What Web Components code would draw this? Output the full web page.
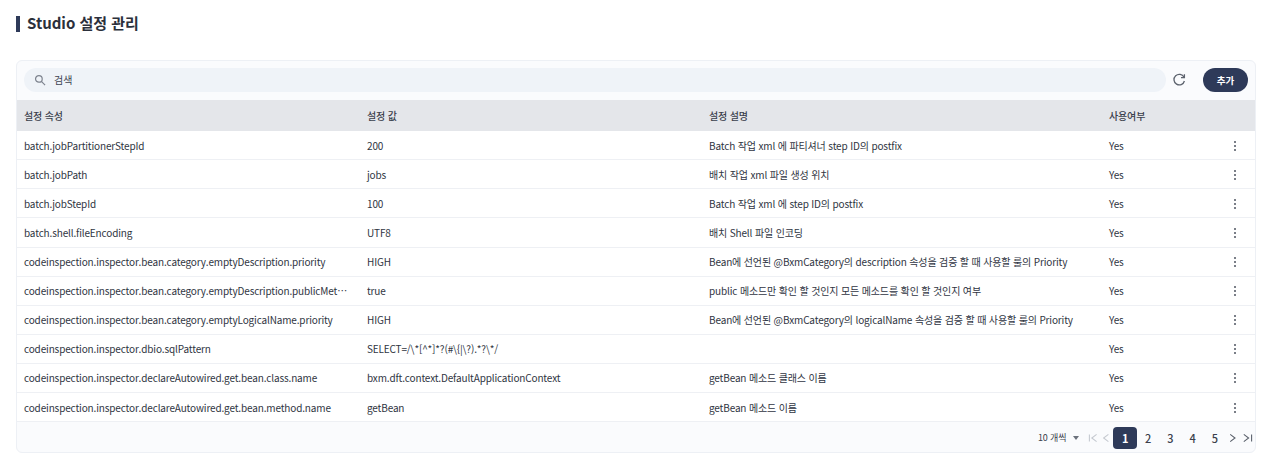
<!DOCTYPE html>
<html lang="ko">
<head>
<meta charset="utf-8">
<title>Studio 설정 관리</title>
<style>
  html, body { margin: 0; background: #fff; }
  body { font-family: "Noto Sans CJK KR", "Noto Sans", sans-serif; color: #2f3542; }
</style>
</head>
<body>
<settings-page>
  <page-title>Studio 설정 관리</page-title>
  <settings-card>
    <search-bar slot="toolbar"></search-bar>
    <settings-table></settings-table>
    <pager-bar slot="footer"></pager-bar>
  </settings-card>
</settings-page>

<script>
  class SettingsPage extends HTMLElement {
    connectedCallback() {
      this.attachShadow({ mode: 'open' });
      this.shadowRoot.innerHTML = `
        <style>
          :host { display: flex; flex-direction: column; gap: 28px; padding: 16px 10px 5px 16px; height: 458px; box-sizing: border-box; }
        </style>
        <slot></slot>
      `;
    }
  }

  class PageTitle extends HTMLElement {
    connectedCallback() {
      this.attachShadow({ mode: 'open' });
      this.shadowRoot.innerHTML = `
        <style>
          :host { display: flex; align-items: flex-start; gap: 7px; height: 16px; font-size: 15px; line-height: 16px; font-weight: 700; color: #2b303b; }
          i { width: 4px; height: 16px; background: #2e3a59; flex: none; }
          span { margin-top: -1px; letter-spacing: -0.02px; }
        </style>
        <i></i><span><slot></slot></span>
      `;
    }
  }

  class SettingsCard extends HTMLElement {
    connectedCallback() {
      this.attachShadow({ mode: 'open' });
      this.shadowRoot.innerHTML = `
        <style>
          :host { display: flex; flex-direction: column; border: 1px solid #edf0f5; border-radius: 6px; background: #fafbfd; overflow: hidden; height: 393px; box-sizing: border-box; }
        </style>
        <slot name="toolbar"></slot>
        <slot></slot>
        <slot name="footer"></slot>
      `;
    }
  }

  class SearchBar extends HTMLElement {
    connectedCallback() {
      this.attachShadow({ mode: 'open' });
      this.shadowRoot.innerHTML = `
        <style>
          :host { display: flex; align-items: center; height: 39px; padding: 0 7px 1px 7px; box-sizing: border-box; }
          .field { flex: 1; height: 24px; border-radius: 12px; background: #eff3f8; display: flex; align-items: center; gap: 8px; padding-left: 10px; font-size: 10px; color: #3d4452; }
          .field svg { width: 12px; height: 12px; }
          .field span { margin-top: -2px; }
          .reload { width: 16px; height: 16px; margin: 0 16px 0 5px; flex: none; }
          button { width: 45px; height: 24px; border: 0; border-radius: 12px; background: #2e3a59; color: #fff; font: 700 9.5px "Noto Sans CJK KR", sans-serif; padding: 0; flex: none; }
        </style>
        <div class="field">
          <svg viewBox="0 0 13 13" fill="none" stroke="#7d838e" stroke-width="1.3"><circle cx="5.3" cy="5.3" r="3.6"/><path d="M8 8l4 4"/></svg>
          <span>검색</span>
        </div>
        <svg class="reload" viewBox="0 0 16 16" fill="none" stroke="#5d636e" stroke-width="1.3">
          <path d="M13 5.2A5.3 5.3 0 1 0 13.4 9"/><path d="M13.4 2.2v3.4H10" stroke-linejoin="miter"/>
        </svg>
        <button>추가</button>
      `;
    }
  }

  const ROWS = [
    ['batch.jobPartitionerStepId', '200', 'Batch 작업 xml 에 파티셔너 step ID의 postfix'],
    ['batch.jobPath', 'jobs', '배치 작업 xml 파일 생성 위치'],
    ['batch.jobStepId', '100', 'Batch 작업 xml 에 step ID의 postfix'],
    ['batch.shell.fileEncoding', 'UTF8', '배치 Shell 파일 인코딩'],
    ['codeinspection.inspector.bean.category.emptyDescription.priority', 'HIGH', 'Bean에 선언된 @BxmCategory의 description 속성을 검증 할 때 사용할 룰의 Priority'],
    ['codeinspection.inspector.bean.category.emptyDescription.publicMet…', 'true', 'public 메소드만 확인 할 것인지 모든 메소드를 확인 할 것인지 여부'],
    ['codeinspection.inspector.bean.category.emptyLogicalName.priority', 'HIGH', 'Bean에 선언된 @BxmCategory의 logicalName 속성을 검증 할 때 사용할 룰의 Priority'],
    ['codeinspection.inspector.dbio.sqlPattern', 'SELECT=/\\*[^*]*?(#\\{|\\?).*?\\*/', ''],
    ['codeinspection.inspector.declareAutowired.get.bean.class.name', 'bxm.dft.context.DefaultApplicationContext', 'getBean 메소드 클래스 이름'],
    ['codeinspection.inspector.declareAutowired.get.bean.method.name', 'getBean', 'getBean 메소드 이름'],
  ];

  class SettingsTable extends HTMLElement {
    connectedCallback() {
      this.attachShadow({ mode: 'open' });
      const dots = `<svg viewBox="0 0 4 12" width="4" height="12" fill="#5a606b"><circle cx="2" cy="2" r="1.1"/><circle cx="2" cy="6" r="1.1"/><circle cx="2" cy="10" r="1.1"/></svg>`;
      const rows = ROWS.map(r => `
        <div class="row">
          <div>${r[0]}</div><div>${r[1]}</div><div>${r[2]}</div><div>Yes</div><div class="act">${dots}</div>
        </div>`).join('');
      this.shadowRoot.innerHTML = `
        <style>
          :host { display: block; background: #fff; font-size: 10px; letter-spacing: -0.15px; color: #2f3542; }
          .row { display: grid; grid-template-columns: 342px 342px 400px 113px 1fr; height: 29.1px; box-sizing: border-box; border-bottom: 1px solid #eef0f4; align-items: center; }
          .row > div { padding: 0 7px; white-space: nowrap; overflow: hidden; min-width: 0; }
          .row > div:nth-child(3), .row > div:nth-child(2), .row > div:nth-child(4) { padding-left: 8px; }
          .head { background: #e4e6ea; height: 31.2px; border-bottom: 0; font-weight: 500; color: #3a404c; }
          .row > .act { display: flex; justify-content: flex-end; padding-right: 18px; margin-top: 1px; }
        </style>
        <div class="row head"><div>설정 속성</div><div>설정 값</div><div>설정 설명</div><div>사용여부</div><div></div></div>
        ${rows}
      `;
    }
  }

  class PagerBar extends HTMLElement {
    connectedCallback() {
      this.attachShadow({ mode: 'open' });
      const arrow = d => `<svg viewBox="0 0 10 10" width="12" height="12" fill="none" stroke="currentColor" stroke-width="0.9"><path d="${d}"/></svg>`;
      this.shadowRoot.innerHTML = `
        <style>
          :host { display: flex; flex: 1; align-items: center; justify-content: flex-end; padding: 1px 1px 0 0; font-size: 9px; letter-spacing: -0.15px; color: #3a404c; }
          .size { margin-right: 7px; }
          .tri { width: 0; height: 0; border: 3.5px solid transparent; border-top: 4px solid #6b717c; border-bottom: 0; margin-right: 7px; }
          .nav { display: flex; color: #c5c9d0; width: 13px; justify-content: center; }
          .nav.on { color: #5a606b; }
          .nav.prev { margin-right: 1px; }
          .pages { display: flex; margin-right: 2px; }
          .pg { width: 22.3px; height: 22px; display: flex; align-items: center; justify-content: center; font-size: 11px; font-weight: 500; border-radius: 4px; }
          .pg.cur { width: 23.5px; background: #2e3a59; color: #fff; font-weight: 700; }
        </style>
        <span class="size">10 개씩</span><i class="tri"></i>
        <span class="nav">${arrow('M2 2v6M8 2L4 5l4 3')}</span>
        <span class="nav prev">${arrow('M7 2L3 5l4 3')}</span>
        <div class="pages">
          <span class="pg cur">1</span><span class="pg">2</span><span class="pg">3</span><span class="pg">4</span><span class="pg">5</span>
        </div>
        <span class="nav on">${arrow('M1 2l4 3-4 3')}</span>
        <span class="nav on">${arrow('M1.5 2l4 3-4 3M8 2v6')}</span>
      `;
    }
  }

  customElements.define('settings-page', SettingsPage);
  customElements.define('page-title', PageTitle);
  customElements.define('settings-card', SettingsCard);
  customElements.define('search-bar', SearchBar);
  customElements.define('settings-table', SettingsTable);
  customElements.define('pager-bar', PagerBar);
</script>
</body>
</html>
